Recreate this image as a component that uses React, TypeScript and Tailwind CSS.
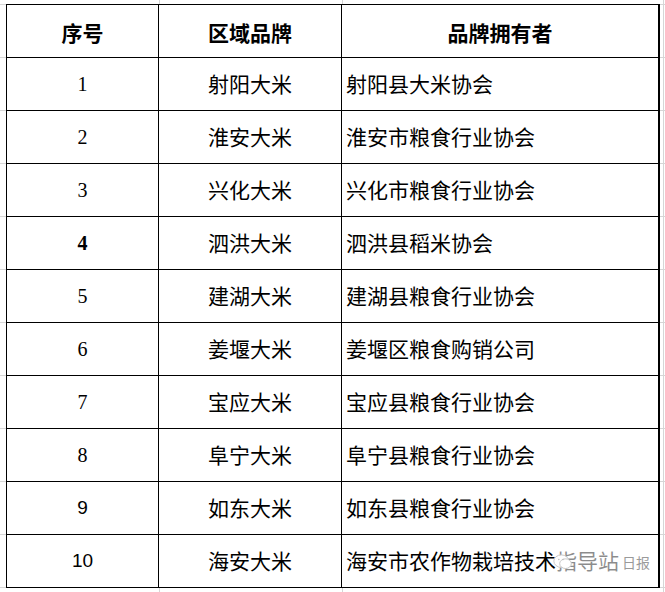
import React from "react";

const rows: [string, string, string][] = [
  ["1", "射阳大米", "射阳县大米协会"],
  ["2", "淮安大米", "淮安市粮食行业协会"],
  ["3", "兴化大米", "兴化市粮食行业协会"],
  ["4", "泗洪大米", "泗洪县稻米协会"],
  ["5", "建湖大米", "建湖县粮食行业协会"],
  ["6", "姜堰大米", "姜堰区粮食购销公司"],
  ["7", "宝应大米", "宝应县粮食行业协会"],
  ["8", "阜宁大米", "阜宁县粮食行业协会"],
  ["9", "如东大米", "如东县粮食行业协会"],
  ["10", "海安大米", "海安市农作物栽培技术指导站"],
];

const cjk = "font-['Noto_Sans_CJK_SC','Noto_Sans',sans-serif]";

export default function App() {
  return (
    <div className="relative w-[665px] h-[592px] overflow-hidden bg-white bg-[image:linear-gradient(to_right,transparent_159px,#d6d6d6_159px_160px,transparent_160px_342px,#d6d6d6_342px_343px,transparent_343px_663px,#d6d6d6_663px_664px,transparent_664px),repeating-linear-gradient(to_bottom,transparent_0_4px,#d6d6d6_4px_5px,transparent_5px_53px)] pt-[4px] pl-[6px]">
      <div className="w-[654px] bg-white border-l border-t border-black border-r-2 text-black">
        <div className={`flex h-[53px] border-b border-black font-bold text-[21px] ${cjk}`}>
          <div className="w-[152px] border-r border-black flex items-center justify-center pt-[3px]">序号</div>
          <div className="w-[183px] border-r border-black flex items-center justify-center pt-[3px]">区域品牌</div>
          <div className="flex-1 flex items-center justify-center pt-[3px]">品牌拥有者</div>
        </div>
        {rows.map(([n, b, o]) => (
          <div key={n} className="flex h-[53px] border-b border-black text-[21px]">
            <div
              className={`w-[152px] border-r border-black flex items-center justify-center ${
                n === "9" || n === "10"
                  ? "font-['Liberation_Sans',sans-serif] font-light text-[19px]"
                  : n === "4"
                  ? "font-['Liberation_Serif',serif] font-bold text-[20px]"
                  : "font-['Liberation_Serif',serif] text-[20px]"
              }`}
            >
              {n}
            </div>
            <div className={`w-[183px] border-r border-black flex items-center justify-center ${cjk}`}>{b}</div>
            <div className={`flex-1 flex items-center pl-[4px] whitespace-nowrap overflow-hidden ${cjk}`}>{o}</div>
          </div>
        ))}
      </div>
      <div className="absolute left-[556px] top-[550px] w-[92px] h-[28px] bg-white/55" />
      <div className="absolute left-[553px] top-[552px] flex items-center">
        <svg width="20" height="20" viewBox="0 0 24 22">
          <ellipse cx="10" cy="10" rx="9" ry="7.5" fill="#ffffff" stroke="#c8c8c8" strokeWidth="1.2" />
          <ellipse cx="15" cy="13" rx="7" ry="5.8" fill="#ffffff" stroke="#c8c8c8" strokeWidth="1.2" />
          <circle cx="7" cy="8" r="1" fill="#bdbdbd" />
          <circle cx="12" cy="8" r="1" fill="#bdbdbd" />
        </svg>
        <span className={`ml-[49px] text-[14px] text-[#9a9a9a] leading-none ${cjk}`}>日报</span>
      </div>
    </div>
  );
}
